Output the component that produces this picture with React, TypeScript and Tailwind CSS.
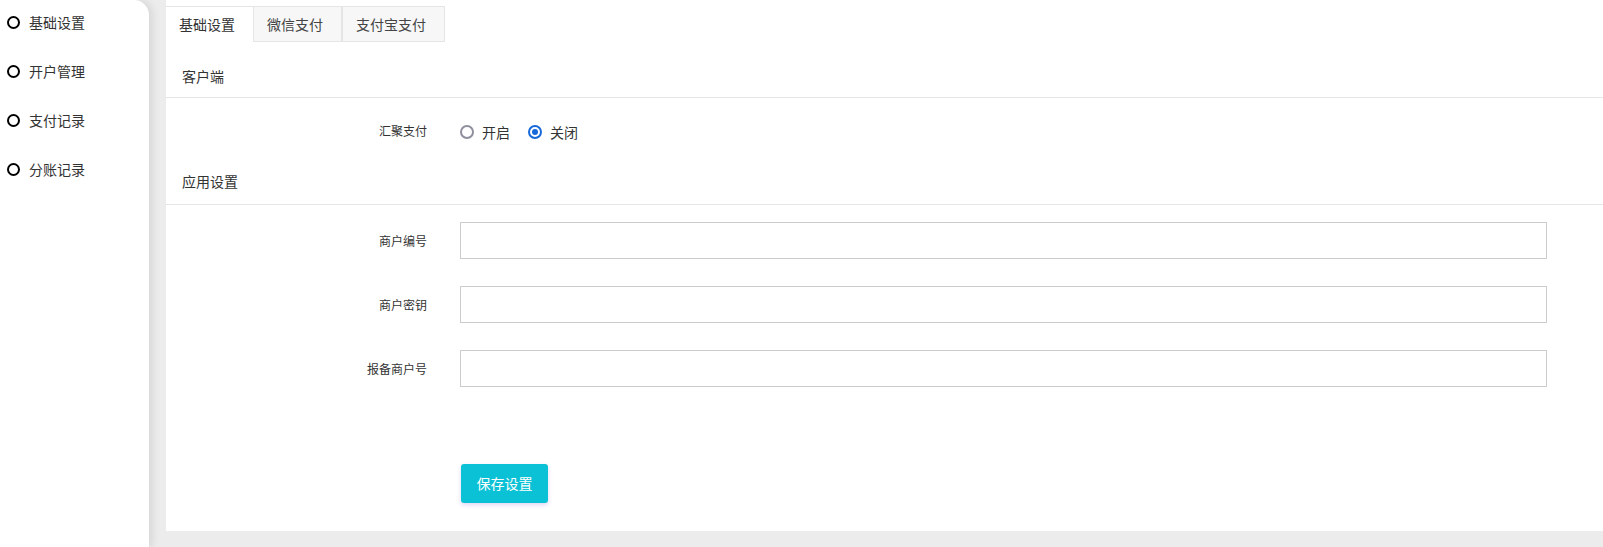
import { useState } from "react";

const menu = ["基础设置", "开户管理", "支付记录", "分账记录"];
const tabs = ["基础设置", "微信支付", "支付宝支付"];
const fields = ["商户编号", "商户密钥", "报备商户号"];

function Radio({ checked, label, onClick }: { checked: boolean; label: string; onClick: () => void }) {
  return (
    <button type="button" onClick={onClick} className="flex items-center gap-[8px] text-[14px] text-[#333]">
      {checked ? (
        <span className="flex h-[14px] w-[14px] items-center justify-center rounded-full border-2 border-[#1769d9]">
          <span className="h-[6px] w-[6px] rounded-full bg-[#1769d9]" />
        </span>
      ) : (
        <span className="h-[14px] w-[14px] rounded-full border-2 border-[#8f8f9d]" />
      )}
      <span className="leading-[20px]">{label}</span>
    </button>
  );
}

export default function App() {
  const [tab, setTab] = useState(0);
  const [open, setOpen] = useState(false);

  return (
    <div
      className="flex h-[547px] w-full bg-[#ececec]"
      style={{ fontFamily: '"Noto Sans CJK SC", "Noto Sans", sans-serif' }}
    >
      {/* sidebar */}
      <aside className="relative z-10 w-[149px] shrink-0 rounded-tr-[15px] bg-white shadow-[3px_0_8px_rgba(0,0,0,0.1)]">
        <ul className="-mt-[2px]">
          {menu.map((m) => (
            <li key={m} className="flex h-[49px] items-center pl-[7px] text-[14px] text-[#333]">
              <span className="mr-[9px] h-[13px] w-[13px] rounded-full border-2 border-black" />
              {m}
            </li>
          ))}
        </ul>
      </aside>

      {/* main panel */}
      <main className="ml-[17px] flex h-[531px] flex-1 flex-col bg-white pt-[6px]">
        <div className="flex h-[36px]">
          {tabs.map((t, i) => (
            <button
              key={t}
              type="button"
              onClick={() => setTab(i)}
              className={
                i === tab
                  ? "h-[36px] border-t border-[#e5e5e5] bg-white pl-[13px] pr-[18px] text-left text-[14px] text-[#333]"
                  : "h-[36px] border border-[#e5e5e5] bg-[#f7f7f7] pl-[13px] pr-[18px] text-left text-[14px] text-[#444]"
              }
            >
              {t}
            </button>
          ))}
        </div>

        <div className="border-b border-[#e5e5e5] pb-[11px] pl-[16px] pt-[24px] text-[14px] leading-[20px] text-[#333]">
          客户端
        </div>

        <div className="flex items-center pt-[22px]">
          <div className="w-[261px] text-right text-[12px] leading-[20px] text-[#333]">汇聚支付</div>
          <div className="ml-[33px] flex items-center gap-[18px] pt-[2px]">
            <Radio checked={open} label="开启" onClick={() => setOpen(true)} />
            <Radio checked={!open} label="关闭" onClick={() => setOpen(false)} />
          </div>
        </div>

        <div className="mt-[29px] border-b border-[#e5e5e5] pb-[13px] pl-[16px] text-[14px] leading-[20px] text-[#333]">
          应用设置
        </div>

        <div className="flex flex-col gap-[27px] pt-[17px]">
          {fields.map((f) => (
            <div key={f} className="flex items-center">
              <div className="w-[261px] text-right text-[12px] leading-[20px] text-[#333]">{f}</div>
              <input
                type="text"
                className="ml-[33px] mr-[56px] h-[37px] flex-1 border border-[#cccccc] px-[8px] text-[14px] outline-none"
              />
            </div>
          ))}
        </div>

        <div className="pl-[295px] pt-[77px]">
          <button
            type="button"
            className="h-[39px] w-[87px] rounded-[3px] bg-[#0bc1d5] text-[14px] text-white shadow-[0_2px_4px_rgba(140,90,220,0.25)]"
          >
            保存设置
          </button>
        </div>
      </main>
    </div>
  );
}
